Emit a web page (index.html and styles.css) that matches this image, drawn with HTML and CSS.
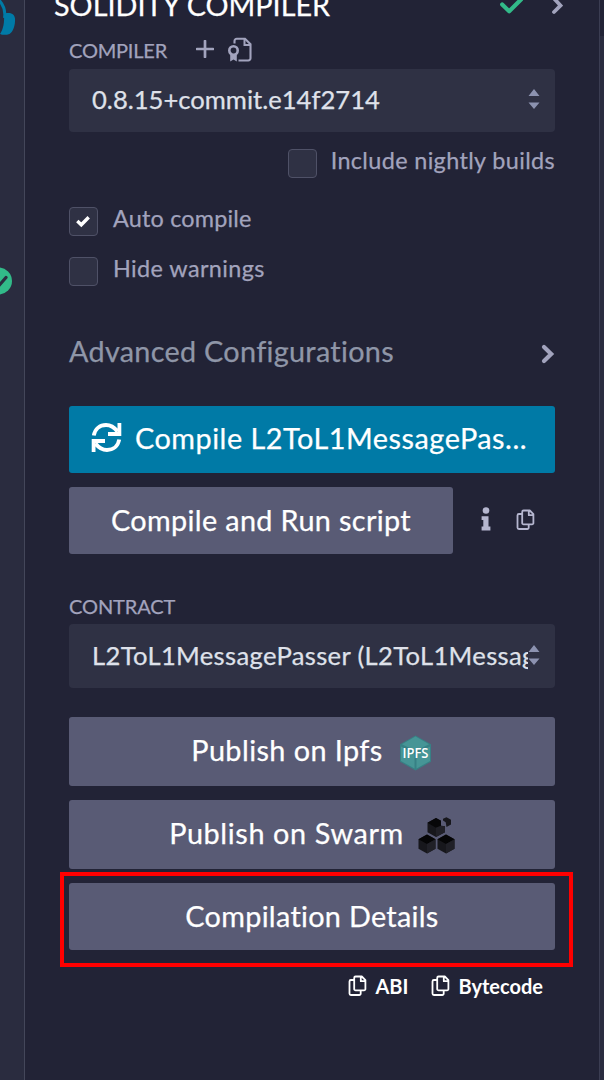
FILE: index.html
```
<!DOCTYPE html>
<html lang="en">
<head>
<meta charset="utf-8">
<title>Solidity Compiler</title>
<link rel="stylesheet" href="styles.css">
</head>
<body>
<svg class="defs" width="0" height="0">
  <symbol id="copy" viewBox="0 0 19 22">
    <path d="M7.6 1.5h6.2l3.6 3.6v8.8a1.4 1.4 0 0 1-1.4 1.4H7.6a1.4 1.4 0 0 1-1.4-1.4V2.9a1.4 1.4 0 0 1 1.4-1.4zM12.8 1.8v4.4h4.4M5.8 5H2.900a1.400 1.400 0 0 0-1.400 1.400v12.200A1.400 1.400 0 0 0 2.900 20h8.400a1.400 1.400 0 0 0 1.400-1.400v-2.900" fill="none" stroke="currentColor" stroke-width="1.8" stroke-linejoin="round"/>
  </symbol>
  <symbol id="sort" viewBox="0 0 12 20"><path d="M6 0l5.500 7H.5zM6 20l5.500-6.600H.5z" fill="currentColor"/></symbol>
</svg>
<div class="app">
  <nav class="rail">
    <svg width="24" height="60" viewBox="0 0 24 60">
      <path d="M-2-1C2 3 6 9 4.500 18" fill="none" stroke="#007aa6" stroke-width="3"/>
      <path d="M6.500 13C11 12.500 14.500 14 15 18.500C15.500 25 13 32 9.500 34C6 35.300 2 35 0 34C3.500 29 4.500 22 4 14z" fill="#007aa6"/>
    </svg>
    <svg class="rail-status" width="24" height="28" viewBox="0 0 24 28">
      <circle cx="-1.500" cy="14" r="13.500" fill="#32ba89"/>
      <path d="M-5 15L-1 18.500L6 10.500" fill="none" stroke="#2a2c3f" stroke-width="3.200" stroke-linecap="round"/>
    </svg>
  </nav>
  <main class="panel">
    <header class="header">
      <h1 class="title">SOLIDITY COMPILER</h1>
      <svg class="ok" width="24" height="24" viewBox="0 0 24 24"><path d="M3.200 14.500l7 6.800L23 8.500" fill="none" stroke="#32ba89" stroke-width="4.200" stroke-linecap="round" stroke-linejoin="round"/></svg>
      <svg class="open" width="12" height="20" viewBox="0 0 12 20"><path d="M2.500 2.900L9.500 10.500l-6.500 6.500" fill="none" stroke="#a2a3bd" stroke-width="3.800" stroke-linecap="round"/></svg>
    </header>

    <div class="caption">
      <span class="compiler">COMPILER</span>
      <svg class="plus" width="18" height="18" viewBox="0 0 18 18"><path d="M9 1v16M1 9h16" stroke="currentColor" stroke-width="2.700" stroke-linecap="round"/></svg>
      <svg class="cert" width="25" height="25" viewBox="0 0 25 25">
        <path d="M7.500 6.500V4a2.200 2.200 0 0 1 2.200-2.200h8.300L23.500 7.300v14a2.200 2.200 0 0 1-2.200 2.200H11.500" fill="none" stroke="currentColor" stroke-width="2.100"/>
        <path d="M17.500 2v6h6" fill="none" stroke="currentColor" stroke-width="2"/>
        <circle cx="6.500" cy="13.500" r="4.200" fill="none" stroke="currentColor" stroke-width="2.600"/>
        <path d="M3.200 17.500h6.600v7l-3.300-2-3.300 2z" fill="currentColor"/>
      </svg>
    </div>
    <div class="select"><span class="value version">0.8.15+commit.e14f2714</span><svg class="sort" width="12" height="20"><use href="#sort"/></svg></div>

    <div class="check nightly"><span class="box"></span><span class="label l-nightly">Include nightly builds</span></div>
    <div class="check auto"><span class="box"><svg width="15" height="13" viewBox="0 0 15 13"><path d="M1.300 6l4 3.800 7.400-7.500" fill="none" stroke="#fff" stroke-width="3.400"/></svg></span><span class="label l-auto">Auto compile</span></div>
    <div class="check hide"><span class="box"></span><span class="label l-hide">Hide warnings</span></div>

    <div class="advanced"><span class="advanced-text">Advanced Configurations</span><svg width="14" height="20" viewBox="0 0 14 20"><path d="M3 3l7.200 7L3 17" fill="none" stroke="#a2a3bd" stroke-width="4.200" stroke-linecap="round"/></svg></div>

    <div class="btn primary">
      <svg width="31" height="31" viewBox="0 0 31 31"><g fill="none" stroke="#fff" stroke-width="3.800"><path d="M2.800 13.500C4 6.500 9 3 15 3c5.500 0 8.500 2.500 11.500 6.500M28.400 1v11H17"/><path d="M28.200 17.500C27 24.500 22 28 16 28c-5.500 0-8.500-2.500-11.500-6.500M2.600 30V19H14"/></g></svg>
      <span class="t-compile">Compile L2ToL1MessagePas...</span>
    </div>
    <div class="run-row">
      <div class="btn run"><span class="t-run">Compile and Run script</span></div>
      <svg class="info" width="10" height="24" viewBox="0 0 10 24"><circle cx="5" cy="3.500" r="3.300"/><path d="M.6 9.200h6.900v10.300h1.900v3.900H.6v-3.900h1.700V13H.6z"/></svg>
      <svg class="copy" width="19" height="22"><use href="#copy"/></svg>
    </div>

    <div class="caption contract"><span class="t-contract">CONTRACT</span></div>
    <div class="select contract-select"><span class="value passer">L2ToL1MessagePasser (L2ToL1MessagePasser.sol)</span><svg class="sort" width="12" height="20"><use href="#sort"/></svg></div>

    <div class="btn publish ipfs"><span class="t-ipfs">Publish on Ipfs</span>
      <svg class="cube" width="33" height="36" viewBox="0 0 33 36">
        <path d="M16.500 .5L32 9.300v17.400L16.500 35.500 1 26.700V9.300z" fill="#378085"/>
        <path d="M16.500 1.500L30 9.300 16.500 16 3 9.300zM2 11.500l13.500 7.500v14.500L2 26zM31 11.500L17.500 19v14.500L31 26z" fill="#469596"/>
        <text x="16.500" y="23.300" text-anchor="middle" textLength="26" lengthAdjust="spacingAndGlyphs" class="cube-text">IPFS</text>
      </svg>
    </div>
    <div class="btn publish swarm"><span class="t-swarm">Publish on Swarm</span>
      <svg class="bees" width="37" height="37" viewBox="0 0 37 37">
        <g id="hex"><path d="M9 17.500l8.500 4.700v9.600L9 36.500.5 31.800v-9.600z" fill="#17171c"/><path d="M9 17.500l8.500 4.700L9 27 .5 22.200z" fill="#050506"/><path d="M9 27l8.500-4.800v9.600L9 36.500z" fill="#202027"/></g>
        <use href="#hex" x="19"/>
        <path d="M18 1l5 2.800v5l4 .5v6L18 20l-8.500-4.700V5.800z" fill="#17171c"/>
        <path d="M18 1l5 2.800v5l-5 2L9.500 5.800z" fill="#070709"/>
        <path d="M18 10.800l5-2 4 .5v6L18 20z" fill="#202027"/>
        <path d="M25 1.800l3.500-1.500 4.500 2.500v4.700l-4.500 2.500-.8-4.800L25 3.500z" fill="#17171c"/>
      </svg>
    </div>
    <div class="details-wrap">
      <div class="btn details"><span class="t-details">Compilation Details</span></div>
      <div class="highlight"></div>
    </div>

    <div class="links">
      <svg width="19" height="22"><use href="#copy"/></svg><span class="abi">ABI</span>
      <svg width="19" height="22"><use href="#copy"/></svg><span class="byte">Bytecode</span>
    </div>
  </main>
  <div class="edge"><div class="edge-top"></div></div>
</div>
</body>
</html>
```
FILE: styles.css
```
* { box-sizing: border-box; }
body { margin: 0; background: #222336; font-family: Lato, "Open Sans", sans-serif; color: #a2a3bd; -webkit-text-stroke: .25px currentColor; }
.defs { position: absolute; }
svg { display: block; flex: none; }
span { white-space: nowrap; }
.app { display: flex; width: 604px; height: 1080px; overflow: hidden; }
.rail { width: 25px; flex: none; background: #2a2c3f; border-right: 1px solid #44475a; }
.rail-status { margin-top: 207px; }
.panel { width: 574px; flex: none; padding: 0 44px; display: flex; flex-direction: column; }
.edge { width: 5px; flex: none; background: #2a2c3f; border-left: 1px solid #3b3d52; }
.edge-top { height: 36px; background: #222336; }

.header { display: flex; align-items: center; height: 66px; flex: none; margin: -28px -12px 0 -15px; }
.title { margin: 0; flex: 1; font-size: 28.8px; font-weight: 400; color: #fff; white-space: nowrap; }
.ok { margin: -7px 28px 0 0; }
.open { margin-right: 4px; }

.caption { display: flex; align-items: center; height: 24px; flex: none; font-size: 20px; margin-bottom: 7px; }
.compiler { letter-spacing: -.2px; width: 127px; }
.plus { margin: -2px 13px 0 0; }
.cert { margin-top: -2px; }
.select { display: flex; align-items: center; height: 63px; flex: none; background: #2f3144; border-radius: 4px; padding: 0 15px 5px 23px; font-size: 25.6px; color: #dfe1ea; }
.value { flex: 1; overflow: hidden; line-height: 36px; }
.version { padding-top: 1px; }
.passer { letter-spacing: .33px; padding-top: 1px; }
.sort { color: #8c92b0; margin-top: 2px; }

.check { display: flex; align-items: center; height: 29px; flex: none; gap: 15px; font-size: 23.4px; }
.box { width: 29px; height: 29px; flex: none; display: flex; align-items: center; justify-content: center; background: #2f3144; border: 1px solid #4f5167; border-radius: 4px; }
.label { padding-bottom: 7px; }
.nightly { margin-top: 17px; justify-content: flex-end; gap: 14px; }
.l-nightly { letter-spacing: .37px; }
.auto { margin-top: 29px; }
.l-auto { letter-spacing: .2px; }
.hide { margin-top: 21px; }
.l-hide { letter-spacing: .4px; }

.advanced { display: flex; align-items: center; justify-content: space-between; height: 40px; flex: none; margin: 46px 0 34px; font-size: 28.8px; color: #8f96a8; }
.advanced-text { letter-spacing: .3px; padding-bottom: 2px; }
.advanced svg { margin-top: 4px; }

.btn { display: flex; align-items: center; justify-content: center; flex: none; height: 67px; background: #595b75; border-radius: 3px; color: #fff; font-size: 28.8px; }
.primary { background: #007aa6; justify-content: flex-start; padding: 0 22px 5px; gap: 13px; }
.t-compile { letter-spacing: .52px; padding-top: 2px; }
.run-row { display: flex; align-items: center; margin-top: 14px; flex: none; }
.run { width: 384px; padding-bottom: 2px; }
.t-run { letter-spacing: .36px; }
.info { margin: -3px 25px 0 28px; fill: #b5b6cf; }
.copy { color: #b5b6cf; margin-top: -2px; }
.contract { margin: 40px 0 5px; height: 25px; padding-bottom: 2px; }
.t-contract { letter-spacing: -.1px; }
.contract-select { height: 64px; padding-bottom: 4px; }
.publish { height: 69px; margin-top: 14px; padding-bottom: 4px; }
.ipfs { margin-top: 29px; gap: 16px; }
.t-ipfs { letter-spacing: .42px; }
.cube { margin: 7px 1px 0 0; }
.cube-text { font: 600 14px "Open Sans", sans-serif; fill: #fff; -webkit-text-stroke: 0; }
.swarm { gap: 14px; }
.t-swarm { letter-spacing: .62px; }
.bees { margin-top: 6px; }
.details-wrap { position: relative; margin-top: 14px; flex: none; }
.details { padding-bottom: 2px; }
.t-details { letter-spacing: .3px; }
.highlight { position: absolute; left: -9px; top: -11px; width: 513px; height: 95px; border: 4px solid #f00; }

.links { display: flex; align-items: center; justify-content: flex-end; height: 22px; flex: none; margin: 25px 12px 0 0; font-size: 20px; font-weight: 700; color: #fff; -webkit-text-stroke: 0; }
.links span { padding-bottom: 1px; margin-left: 8px; }
.links .abi { margin-right: 23px; }
```
